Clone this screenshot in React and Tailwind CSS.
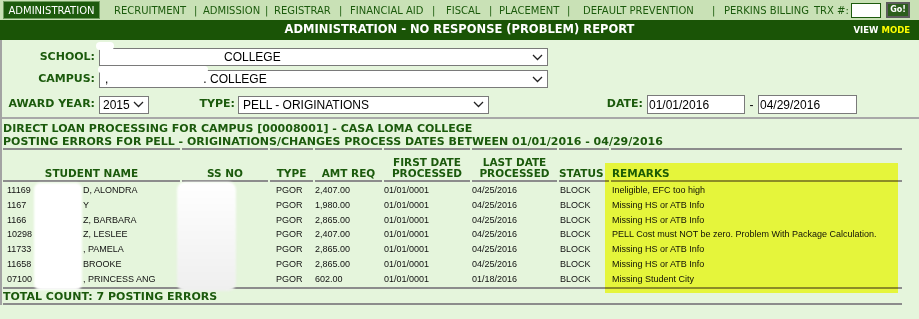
import React from "react";

const GREEN = "text-[#1b5a0c]";

const rows = [
  { id: "11169", name: "D, ALONDRA", amt: "2,407.00", last: "04/25/2016", remark: "Ineligible, EFC too high" },
  { id: "1167", name: "Y", amt: "1,980.00", last: "04/25/2016", remark: "Missing HS or ATB Info" },
  { id: "1166", name: "Z, BARBARA", amt: "2,865.00", last: "04/25/2016", remark: "Missing HS or ATB Info" },
  { id: "10298", name: "Z, LESLEE", amt: "2,407.00", last: "04/25/2016", remark: "PELL Cost must NOT be zero. Problem With Package Calculation." },
  { id: "11733", name: ", PAMELA", amt: "2,865.00", last: "04/25/2016", remark: "Missing HS or ATB Info" },
  { id: "11658", name: "BROOKE", amt: "2,865.00", last: "04/25/2016", remark: "Missing HS or ATB Info" },
  { id: "07100", name: ", PRINCESS ANG", amt: "602.00", last: "01/18/2016", remark: "Missing Student City" },
];

const navItems = [
  { label: "RECRUITMENT", w: "w-[80px]" },
  { sep: true, w: "w-[9px]" },
  { label: "ADMISSION", w: "w-[62px]" },
  { sep: true, w: "w-[9px]" },
  { label: "REGISTRAR", w: "w-[65px]" },
  { sep: true, w: "w-[11px]" },
  { label: "FINANCIAL AID", w: "w-[82px]" },
  { sep: true, w: "w-[14px]" },
  { label: "FISCAL", w: "w-[43px]" },
  { sep: true, w: "w-[10px]" },
  { label: "PLACEMENT", w: "w-[68px]" },
  { sep: true, w: "w-[16px]" },
  { label: "DEFAULT PREVENTION", w: "w-[129px]" },
  { sep: true, w: "w-[12px]" },
  { label: "PERKINS BILLING", w: "w-[90px]" },
  { label: "TRX #:", w: "w-[37px]" },
];

function Chevron() {
  return (
    <svg width="11" height="7" viewBox="0 0 11 7" className="shrink-0">
      <path d="M1 1 L5.5 5.5 L10 1" fill="none" stroke="#222" strokeWidth="1.3" />
    </svg>
  );
}

function SelectBox({ className, children }) {
  return (
    <div className={`flex h-[18px] items-center border border-[#7a7a7a] bg-white pr-[4px] font-['Liberation_Sans',Arial,sans-serif] text-[12px] text-black ${className}`}>
      <div className="flex-1 truncate leading-[16px]">{children}</div>
      <Chevron />
    </div>
  );
}

function Label({ className, children }) {
  return <div className={`font-['DejaVu_Sans',Verdana,sans-serif] text-[11px] font-bold ${GREEN} text-right ${className}`}>{children}</div>;
}

const cols = "grid grid-cols-[32px_143px_86px_43px_67px_86px_85px_50px_291px] gap-x-[2px]";
const th = "flex flex-col items-center justify-end border-y-2 border-[#8c8c8c] pb-[1px] leading-[11px]";

export default function App() {
  return (
    <div className="relative h-[319px] w-[919px] overflow-hidden bg-[#e5f5dc]">
      {/* nav */}
      <div className="flex h-[20px] items-center bg-[#c9e1b6] pl-[3px] font-['DejaVu_Sans',Verdana,sans-serif] text-[10px] text-[#1b5a0c]">
        <div className="flex h-[18px] w-[97px] items-center justify-center border border-[#6f9c5f] bg-[#1d5a0d] text-white">ADMINISTRATION</div>
        <div className="w-[14px]" />
        {navItems.map((n, i) =>
          n.sep ? (
            <span key={i} className={`${n.w} text-[#1b5a0c]`}>|</span>
          ) : (
            <span key={i} className={`${n.w} whitespace-nowrap`}>{n.label}</span>
          )
        )}
        <div className="h-[15px] w-[30px] border border-[#1d5a0d] bg-white" />
        <div className="ml-[5px] flex h-[16px] w-[24px] items-center justify-center border-2 border-[#5c5c5c] bg-[#2c5e1c] text-[8px] font-bold text-white">Go!</div>
      </div>

      {/* title bar */}
      <div className="grid h-[20px] grid-cols-[1fr_auto_1fr] items-center bg-[#1a5406] font-['DejaVu_Sans',Verdana,sans-serif] font-bold">
        <div />
        <div className="text-[11.5px] text-white">ADMINISTRATION - NO RESPONSE (PROBLEM) REPORT</div>
        <div className="flex justify-end gap-[3px] pr-[9px] text-[8.5px]">
          <span className="text-white">VIEW</span>
          <span className="text-[#ffff00]">MODE</span>
        </div>
      </div>

      <div className="border-l-2 border-[#a3a3a3]">
        {/* filters */}
        <div className="flex h-[79px] flex-col border-b-2 border-[#a8a8a8] pt-[8px]">
          <div className="flex items-center">
            <Label className="w-[93px]">SCHOOL:</Label>
            <SelectBox className="ml-[4px] w-[449px]"><span className="pl-[124px]">COLLEGE</span></SelectBox>
          </div>
          <div className="mt-[4px] flex items-center">
            <Label className="w-[93px]">CAMPUS:</Label>
            <SelectBox className="ml-[4px] w-[449px]">
              <span className="pl-[5px]">,</span>
              <span className="pl-[95px]">. COLLEGE</span>
            </SelectBox>
          </div>
          <div className="mt-[7px] flex items-center">
            <Label className="w-[93px]">AWARD YEAR:</Label>
            <SelectBox className="ml-[4px] w-[50px] pl-[3px]">2015</SelectBox>
            <Label className="w-[86px]">TYPE:</Label>
            <SelectBox className="ml-[3px] w-[251px] pl-[4px]">PELL - ORIGINATIONS</SelectBox>
            <Label className="w-[154px]">DATE:</Label>
            <div className="ml-[4px] flex h-[19px] w-[98px] items-center border border-[#7a7a7a] bg-white pl-[1px] font-['Liberation_Sans',Arial,sans-serif] text-[12px]">01/01/2016</div>
            <div className="w-[13px] text-center font-['Liberation_Sans',Arial,sans-serif] text-[12px]">-</div>
            <div className="flex h-[19px] w-[99px] items-center border border-[#7a7a7a] bg-white pl-[1px] font-['Liberation_Sans',Arial,sans-serif] text-[12px]">04/29/2016</div>
          </div>
        </div>

        {/* report */}
        <div className={`pl-[1px] font-['DejaVu_Sans',Verdana,sans-serif] font-bold ${GREEN}`}>
          <div className="pt-[3px] text-[11px] leading-[13px]">
            <div>DIRECT LOAN PROCESSING FOR CAMPUS [00008001] - CASA LOMA COLLEGE</div>
            <div>POSTING ERRORS FOR PELL - ORIGINATIONS/CHANGES PROCESS DATES BETWEEN 01/01/2016 - 04/29/2016</div>
          </div>

          <div className={`${cols} h-[34px] text-[10.5px]`}>
            <div className={`${th} col-span-2`}>STUDENT NAME</div>
            <div className={th}>SS NO</div>
            <div className={th}>TYPE</div>
            <div className={th}>AMT REQ</div>
            <div className={th}><span>FIRST DATE</span><span>PROCESSED</span></div>
            <div className={th}><span>LAST DATE</span><span>PROCESSED</span></div>
            <div className={`${th} !items-start`}>STATUS</div>
            <div className={`${th} !items-start pl-[1px]`}>REMARKS</div>
          </div>

          <div className="w-[899px] border-b-2 border-[#8c8c8c] pt-[1px] font-['Liberation_Sans',Arial,sans-serif] text-[9px] font-normal text-[#111]">
            {rows.map((r) => (
              <div key={r.id} className={`${cols} h-[14.8px] items-center leading-[14.8px]`}>
                <div className="pl-[4px]">{r.id}</div>
                <div className="pl-[46px] whitespace-nowrap">{r.name}</div>
                <div />
                <div className="pl-[6px]">PGOR</div>
                <div>{r.amt}</div>
                <div>01/01/0001</div>
                <div>{r.last}</div>
                <div className="pl-[1px]">BLOCK</div>
                <div className="pl-[1px] whitespace-nowrap">{r.remark}</div>
              </div>
            ))}
          </div>

          <div className="h-[16px] w-[899px] border-b-2 border-[#8c8c8c] text-[11px] leading-[15px]">TOTAL COUNT: 7 POSTING ERRORS</div>
        </div>
      </div>

      {/* redaction blobs */}
      <div className="absolute left-[96px] top-[42px] h-[8px] w-[18px] rounded-full bg-white" />
      <div className="absolute left-[98px] top-[66px] h-[7px] w-[110px] rounded-full bg-white" />
      <div className="absolute left-[34px] top-[183px] h-[107px] w-[48px] rounded-[6px] bg-white blur-[1px]" />
      <div className="absolute left-[177px] top-[182px] h-[109px] w-[59px] rounded-[8px] bg-gradient-to-b from-white to-[#efefef] blur-[1px]" />

      {/* highlighter */}
      <div className="absolute left-[605px] top-[163px] h-[130px] w-[293px] bg-[#ffff44] mix-blend-multiply" />
    </div>
  );
}
